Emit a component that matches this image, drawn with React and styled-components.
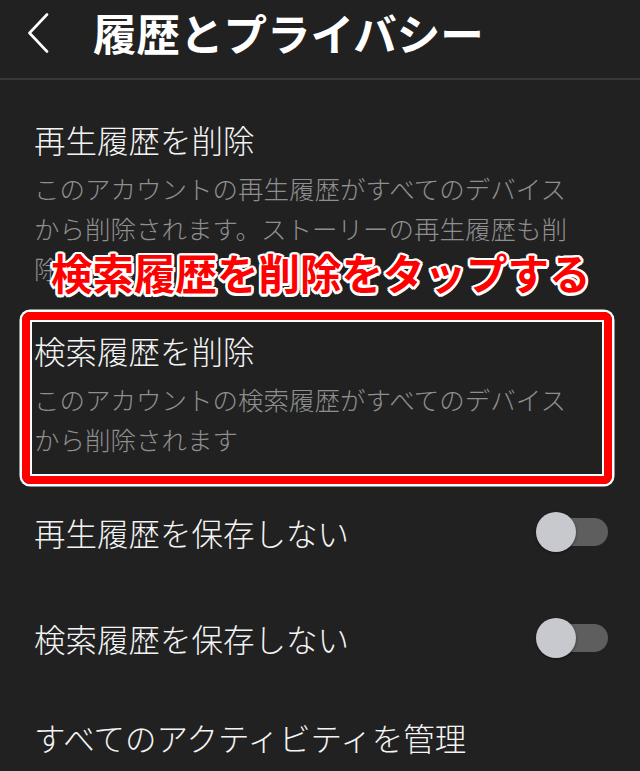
import React from "react";
import styled, { createGlobalStyle } from "styled-components";

// Base page styles
const GlobalStyle = createGlobalStyle`
  html, body {
    margin: 0;
    padding: 0;
    background: #212121;
  }
  body {
    font-family: "Noto Sans CJK JP", "Noto Sans", sans-serif;
    -webkit-font-smoothing: antialiased;
  }
`;

// Screen
const Screen = styled.div`
  position: relative;
  width: 640px;
  height: 771px;
  overflow: hidden;
  background: #212121;
  color: #f2f2f2;
`;

// Top bar with back button and title
const Header = styled.div`
  display: flex;
  align-items: center;
  height: 66px;
  padding: 0 0 12px 26px;
  border-bottom: 2px solid #393939;
`;

const BackButton = styled.div`
  display: flex;
  width: 26px;
  height: 40px;
  margin-right: 41px;
`;

const Title = styled.h1`
  margin: 0;
  font-size: 43.5px;
  font-weight: 700;
  line-height: 1;
  color: #ffffff;
`;

// Settings list
const List = styled.div`
  display: flex;
  flex-direction: column;
  padding-top: 17px;
`;

const Item = styled.div`
  display: flex;
  flex-direction: column;
  padding: ${(p) => (p.$last ? "24px 34px 0" : "20px 34px")};
`;

const ToggleRow = styled.div`
  display: flex;
  align-items: center;
  justify-content: space-between;
  height: 106px;
  padding: 0 32px 0 34px;
  box-sizing: border-box;
`;

const ItemTitle = styled.div`
  font-size: 31.5px;
  font-weight: 300;
  line-height: 44px;
  color: #f4f4f4;
  white-space: nowrap;
`;

const ItemDesc = styled.div`
  width: 550px;
  margin-top: 7px;
  font-size: 25.5px;
  font-weight: 300;
  line-height: 40px;
  color: #8f8f8f;
`;

// Switch
const Switch = styled.div`
  position: relative;
  display: flex;
  align-items: center;
  width: 72px;
  height: 40px;
`;

const Track = styled.div`
  margin-left: 4px;
  width: 68px;
  height: 28px;
  border-radius: 14px;
  background: #5e5e5e;
`;

const Knob = styled.div`
  position: absolute;
  left: 0;
  top: 0;
  width: 40px;
  height: 40px;
  border-radius: 50%;
  background: #c8c9ce;
  box-shadow: 0 1px 3px rgba(0, 0, 0, 0.45);
`;

// Annotation overlays
const Callout = styled.div`
  position: absolute;
  left: 51px;
  top: 247px;
  font-size: 41.5px;
  font-weight: 700;
  line-height: 50px;
  color: #ff0000;
  white-space: nowrap;
  text-shadow:
    2px 0 0 #fff, -2px 0 0 #fff, 0 2px 0 #fff, 0 -2px 0 #fff,
    1.5px 1.5px 0 #fff, -1.5px 1.5px 0 #fff, 1.5px -1.5px 0 #fff, -1.5px -1.5px 0 #fff,
    2.5px 1px 0 #fff, -2.5px 1px 0 #fff, 2.5px -1px 0 #fff, -2.5px -1px 0 #fff,
    1px 2.5px 0 #fff, -1px 2.5px 0 #fff, 1px -2.5px 0 #fff, -1px -2.5px 0 #fff;
`;

const Highlight = styled.div`
  position: absolute;
  left: 22px;
  top: 312px;
  width: 590px;
  height: 172px;
  box-sizing: border-box;
  border: 8px solid #ff0000;
  border-radius: 8px;
  box-shadow: 0 0 0 2.5px #ffffff, inset 0 0 0 2px #ffffff;
`;

const Toggle = () => (
  <Switch>
    <Track />
    <Knob />
  </Switch>
);

const App = () => {
  return (
    <Screen>
      <GlobalStyle />
      <Header>
        <BackButton>
          <svg width="26" height="40" viewBox="0 0 26 40" fill="none">
            <path
              d="M21 1.5 L3.5 20 L21 38.5"
              stroke="#ffffff"
              strokeWidth="2.6"
              strokeLinecap="round"
              strokeLinejoin="round"
            />
          </svg>
        </BackButton>
        <Title>履歴とプライバシー</Title>
      </Header>
      <List>
        <Item>
          <ItemTitle>再生履歴を削除</ItemTitle>
          <ItemDesc>
            このアカウントの再生履歴がすべてのデバイスから削除されます。ストーリーの再生履歴も削除されます。
          </ItemDesc>
        </Item>
        <Item>
          <ItemTitle>検索履歴を削除</ItemTitle>
          <ItemDesc>このアカウントの検索履歴がすべてのデバイスから削除されます</ItemDesc>
        </Item>
        <ToggleRow>
          <ItemTitle>再生履歴を保存しない</ItemTitle>
          <Toggle />
        </ToggleRow>
        <ToggleRow>
          <ItemTitle>検索履歴を保存しない</ItemTitle>
          <Toggle />
        </ToggleRow>
        <Item $last>
          <ItemTitle>すべてのアクティビティを管理</ItemTitle>
        </Item>
      </List>
      <Highlight />
      <Callout>検索履歴を削除をタップする</Callout>
    </Screen>
  );
};

export default App;
